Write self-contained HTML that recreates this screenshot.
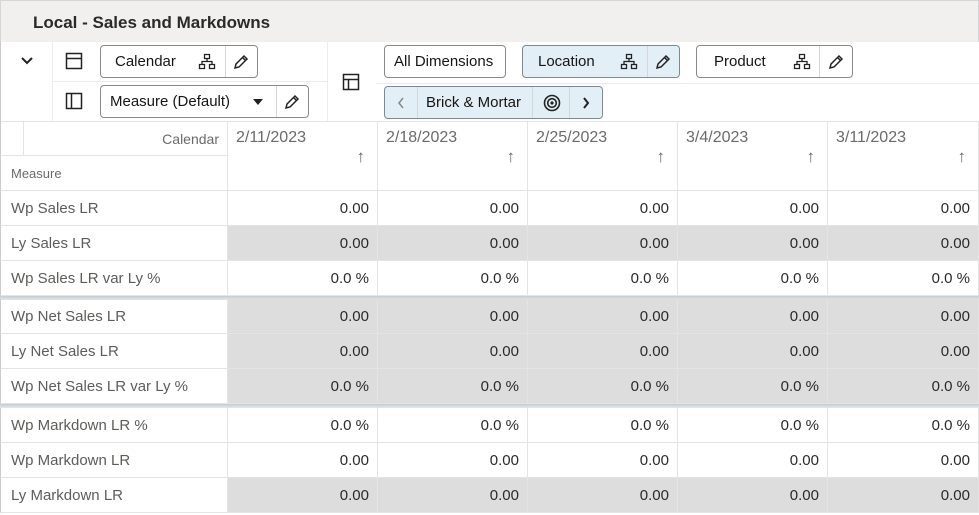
<!DOCTYPE html>
<html><head><meta charset="utf-8"><style>
*{box-sizing:border-box;margin:0;padding:0}
body{width:979px;height:515px;overflow:hidden;background:#fff;font-family:"Liberation Sans",sans-serif;position:relative;color:#161513}
.a{position:absolute}
.title{left:0;top:0;width:979px;height:42px;background:#f1f0ef;border:1px solid #d6d6d6;border-bottom:none}
.title span{position:absolute;left:32px;top:12px;font-size:17px;font-weight:bold;color:#2b2a28}
.btn{position:absolute;height:33px;border:1px solid #8b8986;border-radius:4px;background:#fff;font-size:15px;color:#161513}
.btn.sel{background:#e2eff6;border-color:#7e8a91}
.btn .t{position:absolute;top:7px}
.btn .sep{position:absolute;top:0;width:1px;height:31px;background:#d6d6d6}
.cell{position:absolute;height:35px;border-right:1px solid #e4e4e4;border-bottom:1px solid #e4e4e4;font-size:15px;color:#2a2a2a;text-align:right;padding:9px 8px 0 0}
.lab{position:absolute;left:0;width:228px;height:35px;border-bottom:1px solid #e4e4e4;border-right:1px solid #e4e4e4;border-left:1px solid #ccc;font-size:15px;color:#5e5c59;padding:9px 0 0 10px}
.g{background:#dddddd}
.hd{position:absolute;top:121px;height:70px;border-right:1px solid #e4e4e4;border-bottom:1px solid #e4e4e4;font-size:16px;color:#6b6a68}
.hd .d{position:absolute;left:8px;top:8px}
.hd .ar{position:absolute;right:12px;top:26px;font-size:17px;color:#666}
.sepr{position:absolute;height:4px;background:linear-gradient(#c4ccd1,#e3e8eb)}
</style></head><body>
<div class="a title"><span>Local - Sales and Markdowns</span></div>
<div class="a" style="left:0;top:42px;width:1px;height:80px;background:#ccc"></div>
<div class="a" style="left:52px;top:42px;width:1px;height:79px;background:#ececec"></div>
<div class="a" style="left:327px;top:42px;width:1px;height:79px;background:#ececec"></div>
<div class="a" style="left:52px;top:81px;width:275px;height:1px;background:#ececec"></div>
<div class="a" style="left:376px;top:83px;width:603px;height:1px;background:#ececec"></div>
<svg class="a" style="left:19px;top:55px" width="16" height="12" viewBox="0 0 16 12"><path d="M3 3l5 5 5-5" fill="none" stroke="#222" stroke-width="2"/></svg>
<svg class="a" style="left:65px;top:52px" width="18" height="18"><rect x="1.5" y="1.5" width="15" height="15" fill="none" stroke="#222" stroke-width="1.5"/><line x1="1.5" y1="6.5" x2="16.5" y2="6.5" stroke="#222" stroke-width="1.5"/></svg>
<svg class="a" style="left:65px;top:92px" width="18" height="18"><rect x="1.5" y="1.5" width="15" height="15" fill="none" stroke="#222" stroke-width="1.5"/><line x1="6.5" y1="1.5" x2="6.5" y2="16.5" stroke="#222" stroke-width="1.5"/></svg>
<svg class="a" style="left:342px;top:73px" width="18" height="18"><rect x="1.5" y="1.5" width="15" height="15" fill="none" stroke="#222" stroke-width="1.5"/><path d="M1.5 6.5H16.5M6.5 6.5V16.5" stroke="#222" stroke-width="1.5"/></svg>

<div class="btn" style="left:100px;top:45px;width:158px"><span class="t" style="left:14px">Calendar</span><svg class="a" style="left:97px;top:7px" width="18" height="18"><path d="M6.5 1.5h5v4h-5zM1.5 11.5h5v4h-5zM11.5 11.5h5v4h-5zM9 5.5v3M4 11.5v-3h10v3" fill="none" stroke="#222" stroke-width="1.3"/></svg><span class="sep" style="left:124px"></span><svg class="a" style="left:131px;top:7px" width="18" height="18"><path d="M3 15l1-4 8-8 3 3-8 8zM10.5 4.5l3 3" fill="none" stroke="#222" stroke-width="1.5"/></svg></div>
<div class="btn" style="left:100px;top:85px;width:209px"><span class="t" style="left:9px">Measure (Default)</span><svg class="a" style="left:151px;top:12px" width="12" height="8"><path d="M1 1h10L6 7z" fill="#222"/></svg><span class="sep" style="left:175px"></span><svg class="a" style="left:182px;top:7px" width="18" height="18"><path d="M3 15l1-4 8-8 3 3-8 8zM10.5 4.5l3 3" fill="none" stroke="#222" stroke-width="1.5"/></svg></div>

<div class="btn" style="left:384px;top:45px;width:122px"><span class="t" style="left:9px">All Dimensions</span></div>
<div class="btn sel" style="left:522px;top:45px;width:158px"><span class="t" style="left:15px">Location</span><svg class="a" style="left:97px;top:7px" width="18" height="18"><path d="M6.5 1.5h5v4h-5zM1.5 11.5h5v4h-5zM11.5 11.5h5v4h-5zM9 5.5v3M4 11.5v-3h10v3" fill="none" stroke="#222" stroke-width="1.3"/></svg><span class="sep" style="left:124px"></span><svg class="a" style="left:131px;top:7px" width="18" height="18"><path d="M3 15l1-4 8-8 3 3-8 8zM10.5 4.5l3 3" fill="none" stroke="#222" stroke-width="1.5"/></svg></div>
<div class="btn" style="left:696px;top:45px;width:157px"><span class="t" style="left:17px">Product</span><svg class="a" style="left:96px;top:7px" width="18" height="18"><path d="M6.5 1.5h5v4h-5zM1.5 11.5h5v4h-5zM11.5 11.5h5v4h-5zM9 5.5v3M4 11.5v-3h10v3" fill="none" stroke="#222" stroke-width="1.3"/></svg><span class="sep" style="left:122px"></span><svg class="a" style="left:130px;top:7px" width="18" height="18"><path d="M3 15l1-4 8-8 3 3-8 8zM10.5 4.5l3 3" fill="none" stroke="#222" stroke-width="1.5"/></svg></div>
<div class="btn sel" style="left:384px;top:86px;width:219px"><svg class="a" style="left:11px;top:9px" width="10" height="14"><path d="M7 2L3 7l4 5" fill="none" stroke="#888" stroke-width="1.5"/></svg><span class="sep" style="left:32px"></span><span class="t" style="left:41px">Brick &amp; Mortar</span><span class="sep" style="left:147px"></span><svg class="a" style="left:158px;top:7px" width="18" height="18"><circle cx="9" cy="9" r="7.5" fill="none" stroke="#222" stroke-width="1.6"/><circle cx="9" cy="9" r="4.3" fill="none" stroke="#222" stroke-width="1.6"/><circle cx="9" cy="9" r="1.6" fill="#222"/></svg><span class="sep" style="left:184px"></span><svg class="a" style="left:196px;top:9px" width="10" height="14"><path d="M3 2l4 5-4 5" fill="none" stroke="#222" stroke-width="2"/></svg></div>

<div class="a" style="left:0;top:121px;width:979px;height:1px;background:#e4e4e4"></div>
<div class="a" style="left:0;top:121px;width:228px;height:35px;border-left:1px solid #ccc;border-right:1px solid #e4e4e4;border-bottom:1px solid #e4e4e4"><div class="a" style="left:22px;top:0;width:1px;height:35px;background:#e4e4e4"></div><span class="a" style="right:8px;top:10px;font-size:14px;color:#6b6a68">Calendar</span></div>
<div class="a" style="left:0;top:156px;width:228px;height:35px;border-left:1px solid #ccc;border-right:1px solid #e4e4e4;border-bottom:1px solid #e4e4e4"><span class="a" style="left:10px;top:10px;font-size:13px;color:#6b6a68">Measure</span></div>
<div class="hd" style="left:228px;width:150px"><span class="d">2/11/2023</span><span class="ar">↑</span></div>
<div class="hd" style="left:378px;width:150px"><span class="d">2/18/2023</span><span class="ar">↑</span></div>
<div class="hd" style="left:528px;width:150px"><span class="d">2/25/2023</span><span class="ar">↑</span></div>
<div class="hd" style="left:678px;width:150px"><span class="d">3/4/2023</span><span class="ar">↑</span></div>
<div class="hd" style="left:828px;width:151px"><span class="d">3/11/2023</span><span class="ar">↑</span></div>

<div class="lab" style="top:191px">Wp Sales LR</div>
<div class="cell" style="top:191px;left:228px;width:150px">0.00</div><div class="cell" style="top:191px;left:378px;width:150px">0.00</div><div class="cell" style="top:191px;left:528px;width:150px">0.00</div><div class="cell" style="top:191px;left:678px;width:150px">0.00</div><div class="cell" style="top:191px;left:828px;width:151px">0.00</div>
<div class="lab" style="top:226px">Ly Sales LR</div>
<div class="cell g" style="top:226px;left:228px;width:150px">0.00</div><div class="cell g" style="top:226px;left:378px;width:150px">0.00</div><div class="cell g" style="top:226px;left:528px;width:150px">0.00</div><div class="cell g" style="top:226px;left:678px;width:150px">0.00</div><div class="cell g" style="top:226px;left:828px;width:151px">0.00</div>
<div class="lab" style="top:261px">Wp Sales LR var Ly %</div>
<div class="cell" style="top:261px;left:228px;width:150px">0.0 %</div><div class="cell" style="top:261px;left:378px;width:150px">0.0 %</div><div class="cell" style="top:261px;left:528px;width:150px">0.0 %</div><div class="cell" style="top:261px;left:678px;width:150px">0.0 %</div><div class="cell" style="top:261px;left:828px;width:151px">0.0 %</div>
<div class="sepr" style="top:296px;left:0;width:979px"></div>

<div class="lab" style="top:299px">Wp Net Sales LR</div>
<div class="cell g" style="top:299px;left:228px;width:150px">0.00</div><div class="cell g" style="top:299px;left:378px;width:150px">0.00</div><div class="cell g" style="top:299px;left:528px;width:150px">0.00</div><div class="cell g" style="top:299px;left:678px;width:150px">0.00</div><div class="cell g" style="top:299px;left:828px;width:151px">0.00</div>
<div class="lab" style="top:334px">Ly Net Sales LR</div>
<div class="cell g" style="top:334px;left:228px;width:150px">0.00</div><div class="cell g" style="top:334px;left:378px;width:150px">0.00</div><div class="cell g" style="top:334px;left:528px;width:150px">0.00</div><div class="cell g" style="top:334px;left:678px;width:150px">0.00</div><div class="cell g" style="top:334px;left:828px;width:151px">0.00</div>
<div class="lab" style="top:369px">Wp Net Sales LR var Ly %</div>
<div class="cell g" style="top:369px;left:228px;width:150px">0.0 %</div><div class="cell g" style="top:369px;left:378px;width:150px">0.0 %</div><div class="cell g" style="top:369px;left:528px;width:150px">0.0 %</div><div class="cell g" style="top:369px;left:678px;width:150px">0.0 %</div><div class="cell g" style="top:369px;left:828px;width:151px">0.0 %</div>
<div class="sepr" style="top:404px;left:0;width:979px"></div>

<div class="lab" style="top:408px">Wp Markdown LR %</div>
<div class="cell" style="top:408px;left:228px;width:150px">0.0 %</div><div class="cell" style="top:408px;left:378px;width:150px">0.0 %</div><div class="cell" style="top:408px;left:528px;width:150px">0.0 %</div><div class="cell" style="top:408px;left:678px;width:150px">0.0 %</div><div class="cell" style="top:408px;left:828px;width:151px">0.0 %</div>
<div class="lab" style="top:443px">Wp Markdown LR</div>
<div class="cell" style="top:443px;left:228px;width:150px">0.00</div><div class="cell" style="top:443px;left:378px;width:150px">0.00</div><div class="cell" style="top:443px;left:528px;width:150px">0.00</div><div class="cell" style="top:443px;left:678px;width:150px">0.00</div><div class="cell" style="top:443px;left:828px;width:151px">0.00</div>
<div class="lab" style="top:478px">Ly Markdown LR</div>
<div class="cell g" style="top:478px;left:228px;width:150px">0.00</div><div class="cell g" style="top:478px;left:378px;width:150px">0.00</div><div class="cell g" style="top:478px;left:528px;width:150px">0.00</div><div class="cell g" style="top:478px;left:678px;width:150px">0.00</div><div class="cell g" style="top:478px;left:828px;width:151px">0.00</div>
</body></html>
